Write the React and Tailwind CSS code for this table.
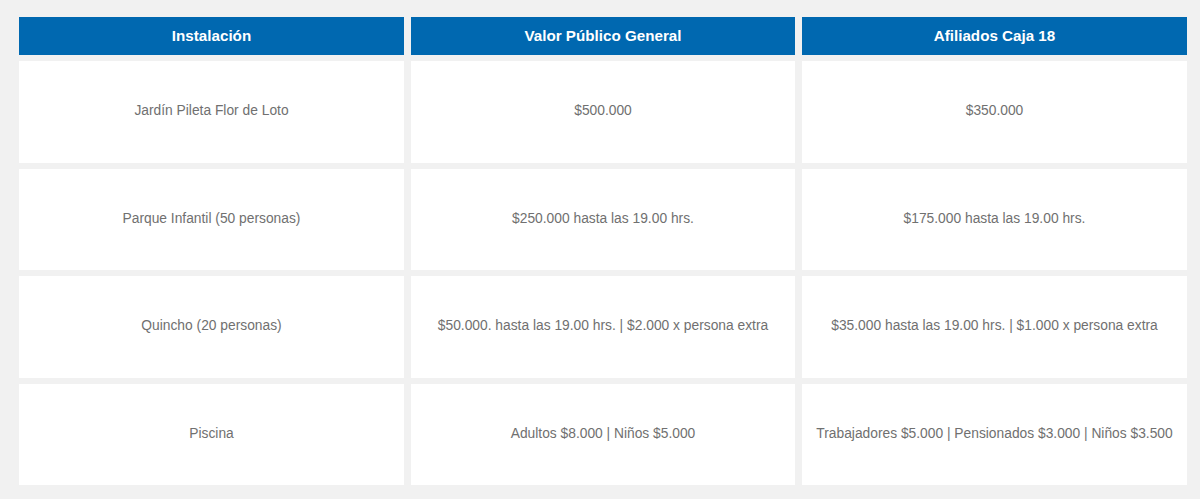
import React from "react";

const rows = [
  ["Jardín Pileta Flor de Loto", "$500.000", "$350.000"],
  ["Parque Infantil (50 personas)", "$250.000 hasta las 19.00 hrs.", "$175.000 hasta las 19.00 hrs."],
  [
    "Quincho (20 personas)",
    "$50.000. hasta las 19.00 hrs. | $2.000 x persona extra",
    "$35.000 hasta las 19.00 hrs. | $1.000 x persona extra",
  ],
  ["Piscina", "Adultos $8.000 | Niños $5.000", "Trabajadores $5.000 | Pensionados $3.000 | Niños $3.500"],
];

const headers = ["Instalación", "Valor Público General", "Afiliados Caja 18"];

export default function App() {
  return (
    <div
      className="min-h-[499px] bg-[#f1f1f1] pl-[19px] pt-[17px]"
      style={{ fontFamily: '"Liberation Sans", Arial, sans-serif' }}
    >
      <div className="grid grid-cols-[385px_384px_385px] gap-x-[7px] gap-y-[6px] auto-rows-[101.5px] [grid-template-rows:38px]">
        {/* Header */}
        {headers.map((h) => (
          <div
            key={h}
            className="flex items-center justify-center bg-[#0068b0] text-[15.2px] font-bold text-white"
          >
            {h}
          </div>
        ))}

        {/* Rows */}
        {rows.map((row) =>
          row.map((cell, i) => (
            <div
              key={row[0] + i}
              className="flex items-center justify-center bg-white px-2 text-center text-[13.8px] text-[#707070]"
            >
              {cell}
            </div>
          ))
        )}
      </div>
    </div>
  );
}
